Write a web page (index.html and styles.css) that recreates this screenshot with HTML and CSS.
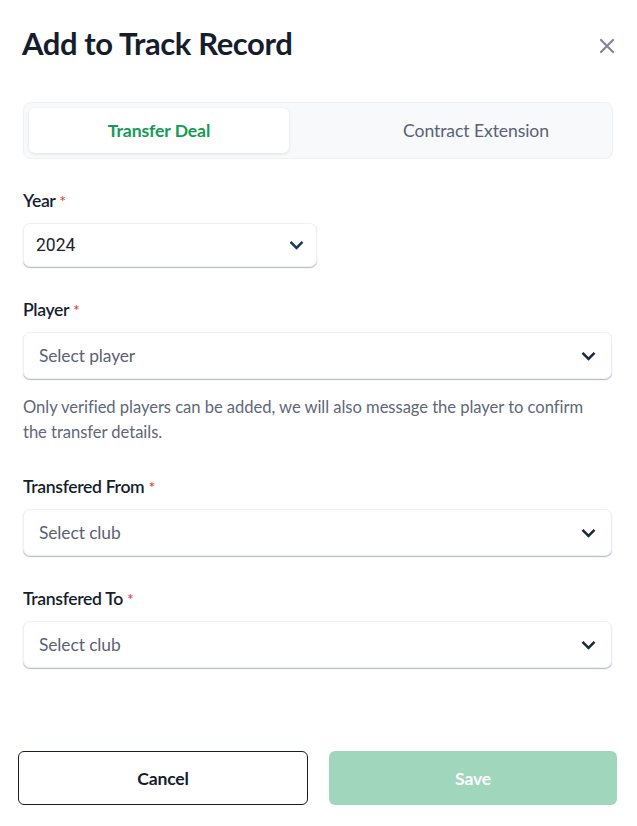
FILE: index.html
```html
<!DOCTYPE html>
<html lang="en">
<head>
<meta charset="utf-8">
<link rel="stylesheet" href="styles.css">
</head>
<body>
<div class="modal">
  <div class="header">
    <h1 class="title">Add to Track Record</h1>
    <button class="close" aria-label="Close">
      <svg width="16" height="16" viewBox="0 0 16 16"><path d="M2 2L14 14M14 2L2 14" stroke="#80859a" stroke-width="2.2" stroke-linecap="round"/></svg>
    </button>
  </div>
  <div class="tabs">
    <div class="tab active">Transfer Deal</div>
    <div class="tab second">Contract Extension</div>
  </div>
  <div class="field first">
    <div class="label">Year <span class="req">*</span></div>
    <div class="select small">
      <span class="value">2024</span>
      <svg class="chev" width="15" height="10" viewBox="0 0 15 10"><path d="M1.5 1.8L7.5 7.8L13.5 1.8" fill="none" stroke="#1b3a5e" stroke-width="2.6"/></svg>
    </div>
  </div>
  <div class="field">
    <div class="label">Player <span class="req">*</span></div>
    <div class="select">
      <span class="placeholder">Select player</span>
      <svg class="chev" width="15" height="10" viewBox="0 0 15 10"><path d="M1.5 1.8L7.5 7.8L13.5 1.8" fill="none" stroke="#1b2a44" stroke-width="2.6"/></svg>
    </div>
    <p class="help">Only verified players can be added, we will also message the player to confirm the transfer details.</p>
  </div>
  <div class="field after-help">
    <div class="label">Transfered From <span class="req">*</span></div>
    <div class="select">
      <span class="placeholder">Select club</span>
      <svg class="chev" width="15" height="10" viewBox="0 0 15 10"><path d="M1.5 1.8L7.5 7.8L13.5 1.8" fill="none" stroke="#1b2a44" stroke-width="2.6"/></svg>
    </div>
  </div>
  <div class="field">
    <div class="label">Transfered To <span class="req">*</span></div>
    <div class="select">
      <span class="placeholder">Select club</span>
      <svg class="chev" width="15" height="10" viewBox="0 0 15 10"><path d="M1.5 1.8L7.5 7.8L13.5 1.8" fill="none" stroke="#1b2a44" stroke-width="2.6"/></svg>
    </div>
  </div>
  <div class="actions">
    <button class="btn cancel">Cancel</button>
    <button class="btn save">Save</button>
  </div>
</div>
</body>
</html>
```
FILE: styles.css
```css
* { box-sizing: border-box; }
html, body { margin: 0; padding: 0; background: #fff; }
body { font-family: Lato, "Noto Sans", sans-serif; color: #161d2d; }
.modal { width: 637px; height: 826px; padding: 0 19px 0 18px; display: flex; flex-direction: column; }
.header { display: flex; justify-content: space-between; align-items: center; padding: 22px 0 0 4px; height: 64px; }
.title { margin: 0; font-size: 31px; font-weight: 700; color: #161d2d; letter-spacing: -0.4px; line-height: 38px; }
.close { border: 0; background: none; padding: 0; margin-top: 6px; margin-right: 3px; display: flex; }
.tabs { margin: 38px 5px 0 5px; height: 57px; background: #f8f9fb; border: 1px solid #eef0f3; border-radius: 8px; padding: 5px; display: grid; grid-template-columns: 260px 1fr; }
.tab { display: flex; align-items: center; justify-content: center; font-size: 17.6px; color: #5a6275; border-radius: 6px; letter-spacing: -0.1px; }
.tab.second { padding-left: 56px; }
.tab.active { background: #fff; color: #159a55; font-weight: 700; box-shadow: 0 1px 3px rgba(20,30,50,0.12); }
.field { margin: 32px 6px 0 5px; }
.field.first { margin-top: 31px; }
.field.after-help { margin-top: 31px; }
.label { font-size: 17.6px; font-weight: 600; color: #161d2d; line-height: 22px; letter-spacing: -0.35px; }
.req { color: #e5322d; font-weight: 400; font-size: 16px; }
.select { margin-top: 11px; height: 47px; border: 1px solid #eff0f5; border-radius: 7px; box-shadow: 0 1px 1px rgba(120,130,160,0.55); display: flex; align-items: center; justify-content: space-between; padding: 0 15px 0 15px; background: #fff; }
.select.small { width: 294px; height: 44px; padding: 0 12px 0 12px; }
.value { font-family: Roboto, "Liberation Sans", sans-serif; font-size: 17.5px; color: #1c2230; }
.placeholder { font-size: 17.4px; color: #5a6275; letter-spacing: -0.1px; }
.help { margin: 16px 0 0 0; padding-right: 8px; font-size: 16.6px; line-height: 25px; color: #5f6778; letter-spacing: -0.05px; }
.actions { margin-top: auto; margin-bottom: 21px; display: flex; gap: 21px; margin-left: 0; margin-right: 1px; }
.btn { flex: 1; height: 54px; border-radius: 6px; font-family: Lato, sans-serif; font-size: 17.6px; font-weight: 700; letter-spacing: -0.2px; }
.cancel { background: #fff; border: 1px solid #161d2d; color: #161d2d; }
.save { background: #a0d6bc; border: 0; color: #fff; }
```
